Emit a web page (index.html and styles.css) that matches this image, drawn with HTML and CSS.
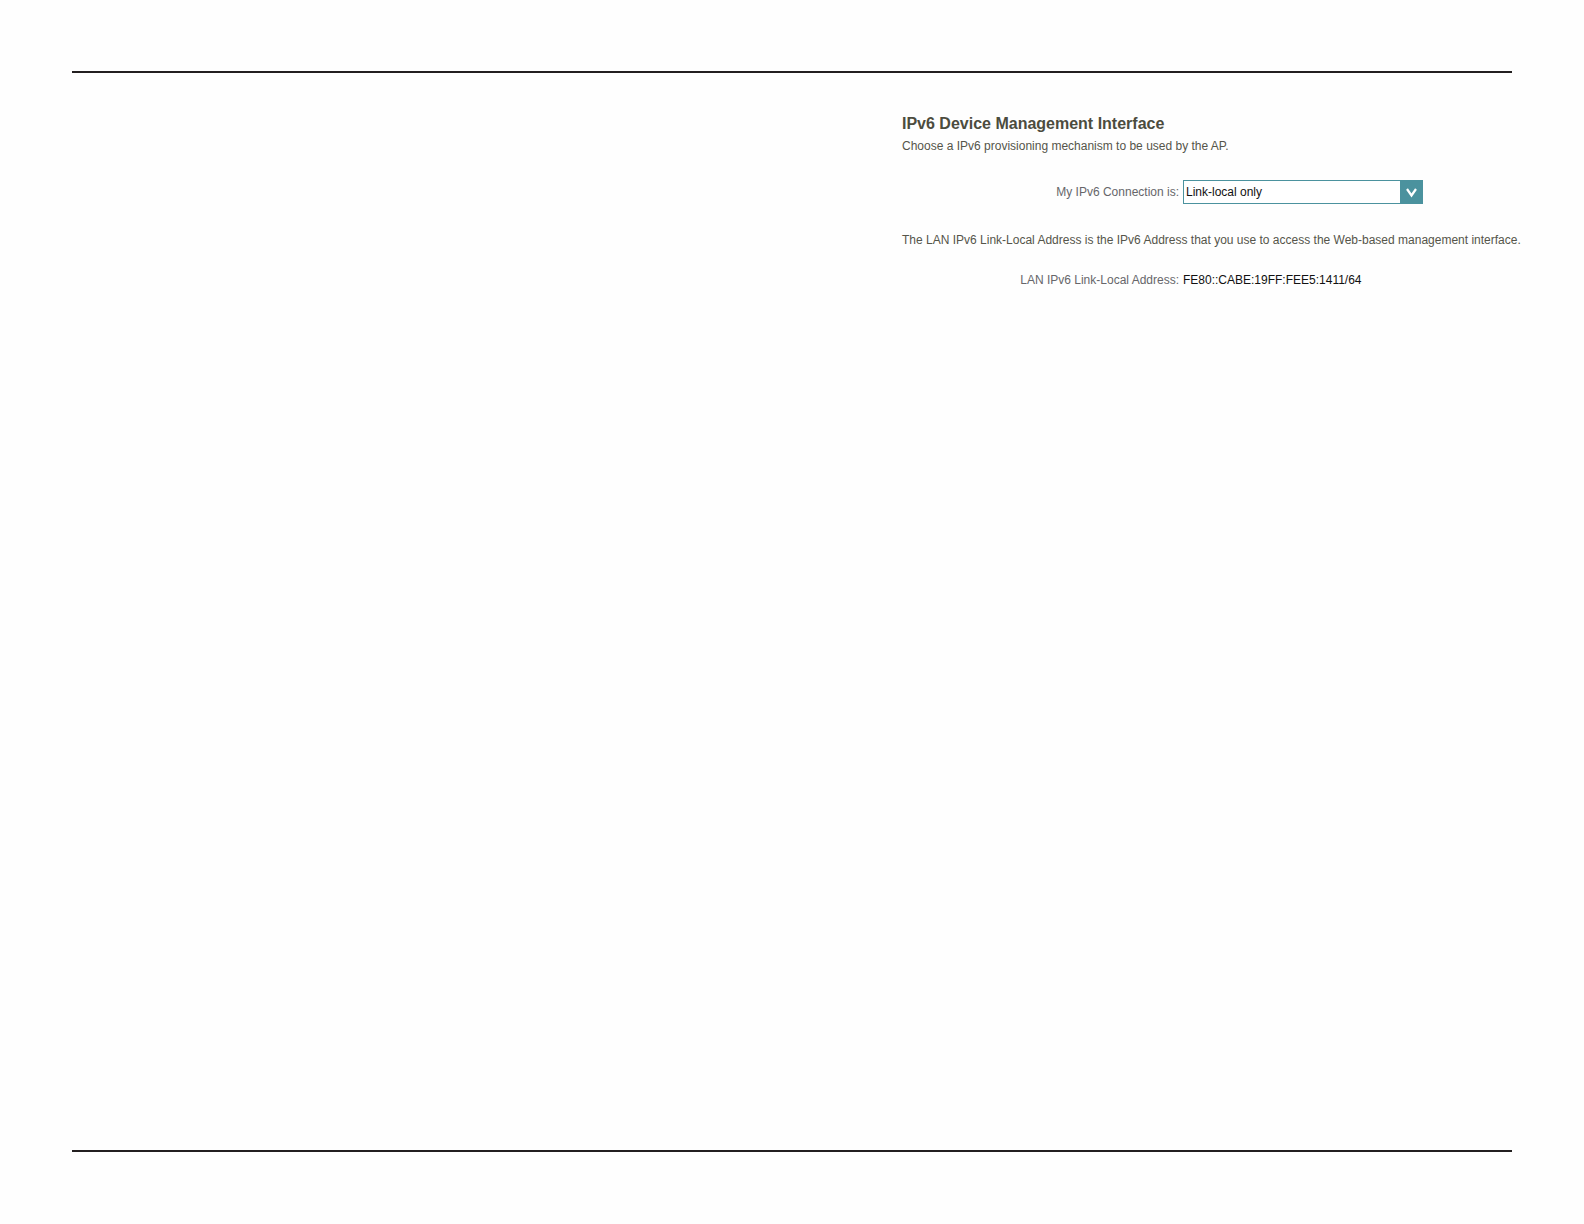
FILE: index.html
```html
<!DOCTYPE html>
<html lang="en">
<head>
  <meta charset="UTF-8">
  <meta name="viewport" content="width=device-width, initial-scale=1.0">
  <title>IPv6 Device Management Interface</title>
  <link rel="stylesheet" href="styles.css">
</head>
<body>
  <main class="page">
    <form class="settings">
      <h1>IPv6 Device Management Interface</h1>
      <p class="intro">Choose a IPv6 provisioning mechanism to be used by the AP.</p>

      <div class="row">
        <label for="connection">My IPv6 Connection is:</label>
        <div class="select-box">
          <select id="connection">
            <option>Link-local only</option>
          </select>
          <span class="arrow">
            <svg width="12" height="11" viewBox="0 0 12 11"><path d="M1 2L5.5 8.5L10 2" fill="none" stroke="#fff" stroke-width="2.2"/></svg>
          </span>
        </div>
      </div>

      <p class="note">The LAN IPv6 Link-Local Address is the IPv6 Address that you use to access the Web-based management interface.</p>

      <div class="row">
        <label for="address">LAN IPv6 Link-Local Address:</label>
        <output id="address">FE80::CABE:19FF:FEE5:1411/64</output>
      </div>
    </form>
  </main>
</body>
</html>
```
FILE: styles.css
```css
* {
  margin: 0;
  padding: 0;
  box-sizing: border-box;
}
body {
  font-family: "Liberation Sans", Arial, sans-serif;
  font-size: 12px;
  line-height: 20px;
  background-color: #fefefe;
  color: #55554a;
  min-height: 100vh;
  display: flex;
  padding: 71px 72px 72px;
}
.page {
  flex: 1;
  display: flex;
  justify-content: flex-end;
  align-items: flex-start;
  border-top: 2px solid #231f20;
  border-bottom: 2px solid #231f20;
  padding-top: 41px;
}
.settings {
  width: 100%;
  max-width: 610px;
}
h1 {
  font-size: 16px;
  line-height: 20px;
  color: #4c4c3e;
}
.intro {
  margin: 2px 0 24px;
}
.note {
  margin: 26px 0 20px;
  white-space: nowrap;
}
.row {
  display: grid;
  grid-template-columns: 277px 1fr;
  column-gap: 4px;
  align-items: center;
}
.row label {
  text-align: right;
  color: #66666a;
}
.select-box {
  position: relative;
  width: 240px;
  height: 24px;
}
.select-box select {
  appearance: none;
  width: 100%;
  height: 100%;
  padding: 0 26px 0 2px;
  border: 1px solid #4b929e;
  border-radius: 0;
  background-color: #fff;
  color: #111;
  font-family: inherit;
  font-size: 12px;
}
/* drop-down button drawn over the right end of the select */
.arrow {
  position: absolute;
  top: 0;
  right: 0;
  width: 23px;
  height: 100%;
  display: flex;
  justify-content: center;
  align-items: center;
  background-color: #4b929e;
  pointer-events: none;
}
output {
  color: #111;
}
```
